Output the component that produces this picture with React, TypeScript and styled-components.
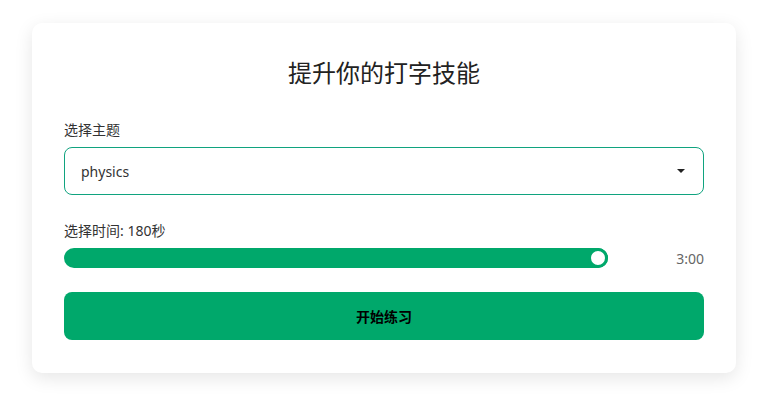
import styled, { createGlobalStyle } from "styled-components";

const GlobalStyle = createGlobalStyle`
  body {
    margin: 0;
    background: #ffffff;
    font-family: "Noto Sans", "Noto Sans CJK SC", sans-serif;
    color: #333333;
  }
`;

const Page = styled.main`
  min-height: 407px;
  box-sizing: border-box;
  padding: 23px 34px 35px 32px;
`;

const Card = styled.section`
  display: flex;
  flex-direction: column;
  background: #ffffff;
  border-radius: 10px;
  padding: 32px 32px 33px 32px;
  box-shadow: 0 5px 18px rgba(0, 0, 0, 0.1);
`;

const Title = styled.h1`
  margin: 0 0 28px;
  text-align: center;
  font-size: 24px;
  line-height: 36px;
  font-weight: 400;
  color: #222222;
`;

const Label = styled.label`
  display: block;
  font-size: 14px;
  line-height: 21px;
  color: #333333;
  margin-bottom: 7px;
`;

const SelectBox = styled.div`
  display: flex;
  align-items: center;
  justify-content: space-between;
  height: 48px;
  box-sizing: border-box;
  padding: 0 16px;
  border: 1px solid #10a37f;
  border-radius: 8px;
  font-size: 14px;
  color: #333333;
  margin-bottom: 25px;
`;

const Caret = styled.span`
  width: 0;
  height: 0;
  border-left: 4px solid transparent;
  border-right: 4px solid transparent;
  border-top: 4px solid #222222;
  margin-right: 2px;
`;

const SliderRow = styled.div`
  display: flex;
  align-items: center;
  gap: 16px;
  margin-bottom: 24px;
`;

const Track = styled.div`
  position: relative;
  flex: 1;
  height: 20px;
  border-radius: 10px;
  background: #00a86b;
`;

const Thumb = styled.span`
  position: absolute;
  top: 0;
  width: 20px;
  height: 20px;
  box-sizing: border-box;
  border-radius: 50%;
  background: #ffffff;
  border: 3px solid #00a86b;
`;

const TimeText = styled.span`
  width: 80px;
  text-align: right;
  font-size: 14px;
  color: #666666;
`;

const StartButton = styled.button`
  height: 48px;
  border: none;
  border-radius: 8px;
  background: #00a86b;
  color: #000000;
  font-family: "Noto Sans CJK SC", sans-serif;
  font-size: 14px;
  font-weight: 700;
  cursor: pointer;
`;

export default function App() {
  const seconds = 180;
  const max = 180;
  const pct = seconds / max;
  const mm = Math.floor(seconds / 60);
  const ss = String(seconds % 60).padStart(2, "0");

  return (
    <>
      <GlobalStyle />
      <Page>
        <Card>
          <Title>提升你的打字技能</Title>
          <Label>选择主题</Label>
          <SelectBox>
            <span>physics</span>
            <Caret />
          </SelectBox>
          <Label>选择时间: {seconds}秒</Label>
          <SliderRow>
            <Track>
              <Thumb style={{ left: `calc(${pct * 100}% - 20px)` }} />
            </Track>
            <TimeText>
              {mm}:{ss}
            </TimeText>
          </SliderRow>
          <StartButton>开始练习</StartButton>
        </Card>
      </Page>
    </>
  );
}
